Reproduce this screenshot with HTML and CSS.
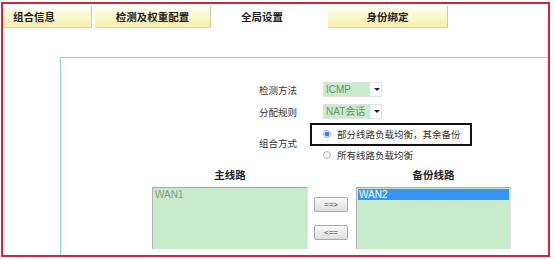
FILE: index.html
```html
<!DOCTYPE html>
<html lang="zh-CN">
<head>
    <meta charset="UTF-8">
    <title>全局设置</title>
    <link rel="stylesheet" href="styles.css">
</head>
<body>
    <div class="frame">
        <div class="tabs">
            <div class="tab tab-first">组合信息</div>
            <div class="tab tab-wide">检测及权重配置</div>
            <div class="tab tab-active">全局设置</div>
            <div class="tab tab-last">身份绑定</div>
        </div>
        <div class="panel">
            <div class="form-row">
                <span class="label">检测方法</span>
                <div class="select"><span class="select-value">ICMP</span><span class="arrow"></span></div>
            </div>
            <div class="form-row">
                <span class="label">分配规则</span>
                <div class="select"><span class="select-value">NAT会话</span><span class="arrow"></span></div>
            </div>
            <div class="form-row mode-row">
                <span class="label label-short">组合方式</span>
                <div class="radios">
                    <div class="radio-line highlight"><span class="radio checked"></span>部分线路负载均衡，其余备份</div>
                    <div class="radio-line"><span class="radio"></span>所有线路负载均衡</div>
                </div>
            </div>
            <div class="lines">
                <div class="line-col main-col">
                    <div class="line-head">主线路</div>
                    <div class="listbox"><div class="option">WAN1</div></div>
                </div>
                <div class="move-buttons">
                    <button class="move">==&gt;</button>
                    <button class="move">&lt;==</button>
                </div>
                <div class="line-col backup-col">
                    <div class="line-head">备份线路</div>
                    <div class="listbox"><div class="option selected">WAN2</div></div>
                </div>
            </div>
        </div>
    </div>
</body>
</html>
```

FILE: styles.css
```css
body {
    margin: 0;
    background: #fff;
    font-family: "Noto Sans CJK SC", "Liberation Sans", sans-serif;
}
.frame {
    box-sizing: border-box;
    width: 549px;
    height: 255px;
    margin: 2px 0 0 1px;
    border: 2px solid #cc2a38;
    overflow: hidden;
}
.tabs {
    display: flex;
    margin-top: 2px;
    height: 22px;
}
.tab {
    box-sizing: border-box;
    height: 22px;
    line-height: 21px;
    font-size: 10.5px;
    font-weight: bold;
    color: #222;
    text-align: center;
    background: linear-gradient(#fffef2, #f7efaa);
    border-right: 1px solid #cfcbb0;
    border-bottom: 1px solid #d8d4bc;
}
.tab-first {
    width: 89px;
    text-align: left;
    padding-left: 10px;
}
.tab-wide {
    width: 116px;
    margin-left: 3px;
}
.tab-active {
    width: 102px;
    background: #fff;
    border: none;
}
.tab-last {
    width: 120px;
    margin-left: 15px;
}
.panel {
    margin: 29px 0 0 57px;
    height: 200px;
    border-top: 1px solid #8fd6cb;
    border-left: 1px solid #8fd6cb;
    font-size: 9.5px;
    color: #333;
}
.form-row {
    display: flex;
    align-items: center;
    height: 15px;
    margin-left: 198px;
    margin-top: 7px;
}
.form-row:first-child {
    margin-top: 24px;
}
.label {
    width: 64px;
}
.label-short {
    width: 51px;
}
.select {
    display: flex;
    align-items: center;
    box-sizing: border-box;
    width: 59px;
    height: 15px;
    border: 1px solid #e2e2e2;
    background: #fff;
}
.select-value {
    align-self: stretch;
    width: 44px;
    line-height: 13px;
    padding-left: 2px;
    background: #c8ecca;
    color: #6f8f6f;
    font-family: "Liberation Sans", "Noto Sans CJK SC", sans-serif;
    font-size: 10px;
}
.arrow {
    width: 0;
    height: 0;
    margin-left: 4px;
    border-left: 3px solid transparent;
    border-right: 3px solid transparent;
    border-top: 3px solid #222;
}
.mode-row {
    height: 42px;
    margin-top: 3px;
}
.radios {
    display: flex;
    flex-direction: column;
}
.radio-line {
    display: flex;
    align-items: center;
    height: 17px;
    padding-left: 13px;
    color: #333;
}
.radio-line.highlight {
    box-sizing: border-box;
    width: 162px;
    height: 23px;
    padding-left: 11px;
    border: 2px solid #111;
    margin-bottom: 1px;
}
.radio {
    box-sizing: border-box;
    width: 8px;
    height: 8px;
    margin-right: 6px;
    border-radius: 50%;
    border: 1px solid #b9b9b9;
    background: #f1f1f1;
}
.radio.checked {
    background: radial-gradient(circle, #3d7ad8 0 2px, #dfe9f6 2.5px);
    border-color: #9ab0cc;
}
.lines {
    display: flex;
    margin: 4px 0 0 91px;
}
.line-col {
    display: flex;
    flex-direction: column;
}
.main-col {
    width: 156px;
}
.backup-col {
    width: 155px;
}
.line-head {
    height: 19px;
    line-height: 14px;
    text-align: center;
    font-size: 10.5px;
    font-weight: bold;
    color: #222;
}
.listbox {
    box-sizing: border-box;
    height: 62px;
    background: #c8ebcc;
    border-top: 1px solid #a9a9a9;
    border-left: 1px solid #b3b3b3;
    border-right: 1px solid #e4e4e4;
    padding: 1px;
    font-family: "Liberation Sans", sans-serif;
    font-size: 10px;
}
.option {
    height: 11px;
    line-height: 11px;
    padding-left: 1px;
    color: #8a9a8c;
}
.option.selected {
    background: #3794f2;
    color: #fff;
}
.move-buttons {
    display: flex;
    flex-direction: column;
    gap: 13px;
    margin: 29px 8px 0 6px;
}
.move {
    box-sizing: border-box;
    width: 34px;
    height: 15px;
    padding: 0;
    font-family: "Liberation Sans", sans-serif;
    font-size: 8px;
    color: #333;
    background: linear-gradient(#fafafa, #dedede);
    border: 1px solid #a8a8a8;
    border-radius: 2px;
}
```
